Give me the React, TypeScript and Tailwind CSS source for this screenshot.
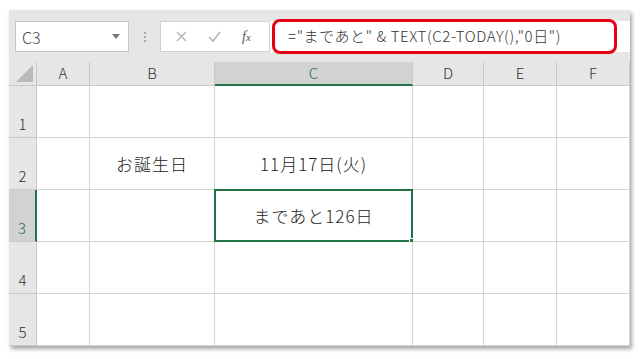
import React from "react";

const font = { fontFamily: '"Noto Sans CJK JP", "Noto Sans", sans-serif' };

const cols = ["A", "B", "C", "D", "E", "F"];
const rows = [1, 2, 3, 4, 5];

function Cell({ r, c }: { r: number; c: string }) {
  let text = "";
  if (r === 2 && c === "B") text = "お誕生日";
  if (r === 2 && c === "C") text = "11月17日(火)";
  if (r === 3 && c === "C") text = "まであと126日";
  const selected = r === 3 && c === "C";
  return (
    <div className="relative flex items-center justify-center border-r border-b border-[#d4d4d4] bg-white text-[17px] tracking-[1px] font-light text-[#222]">
      {text}
      {selected && (
        <div className="absolute -top-px -left-px -right-px -bottom-px border-2 border-[#217346]">
          <div className="absolute -right-[4px] -bottom-[4px] w-[6px] h-[6px] bg-[#217346] border border-white" />
        </div>
      )}
    </div>
  );
}

function App() {
  return (
    <div className="w-[643px] h-[359px] bg-white pt-[10px] pl-[9px]" style={font}>
      <div className="w-[621px] h-[336px] bg-[#e6e6e6] shadow-[2px_3px_4px_rgba(0,0,0,0.35)] flex flex-col">
        {/* toolbar */}
        <div className="h-[52px] flex items-start pt-[11px] pl-[6px]">
          <div className="w-[114px] h-[31px] bg-white border border-[#c6c6c6] flex items-center justify-between pl-[6px] pr-[8px] text-[16px] font-light text-[#444]">
            <span>C3</span>
            <svg width="8" height="5" viewBox="0 0 8 5">
              <path d="M0 0h8L4 5z" fill="#777" />
            </svg>
          </div>
          <div className="w-[31px] h-[31px] flex flex-col items-center justify-center gap-[2px]">
            <span className="w-[2px] h-[2px] bg-[#aaa]" />
            <span className="w-[2px] h-[2px] bg-[#aaa]" />
            <span className="w-[2px] h-[2px] bg-[#aaa]" />
          </div>
          <div className="w-[110px] h-[31px] bg-white border border-[#d0d0d0] flex items-center">
            <svg className="ml-[15px]" width="11" height="11" viewBox="0 0 11 11">
              <path d="M1 1l9 9M10 1l-9 9" stroke="#b4b4b4" strokeWidth="1.4" />
            </svg>
            <svg className="ml-[21px]" width="13" height="11" viewBox="0 0 13 11">
              <path d="M1 6l4 4 7-9" stroke="#b4b4b4" strokeWidth="1.6" fill="none" />
            </svg>
            <span
              className="ml-[21px] italic text-[14px] text-[#555]"
              style={{ fontFamily: '"Liberation Serif", serif' }}
            >
              f<span className="text-[11px]">x</span>
            </span>
          </div>
          <div className="flex-1 h-[31px] bg-white relative">
            <div className="absolute left-[2px] -top-[2px] w-[345px] h-[35px] border-[3px] border-[#e50012] rounded-[8px] flex items-center pl-[13px] text-[15px] tracking-[0.6px] font-light text-[#333] whitespace-nowrap">
              ="まであと" &amp; TEXT(C2-TODAY(),"0日")
            </div>
          </div>
        </div>
        {/* sheet */}
        <div className="mt-[10px] grid grid-cols-[28px_53px_125px_198px_71px_73px_73px] grid-rows-[24px_repeat(5,52px)]">
          <div className="bg-[#e6e6e6] border-r border-b border-[#c8c8c8] relative">
            <svg className="absolute right-[3px] bottom-[3px]" width="17" height="17" viewBox="0 0 17 17">
              <path d="M17 0V17H0z" fill="#b9b9b9" />
            </svg>
          </div>
          {cols.map((c) => (
            <div
              key={c}
              className={
                c === "C"
                  ? "bg-[#d2d2d2] border-r border-[#c8c8c8] border-b-2 border-b-[#217346] flex items-center justify-center text-[15px] font-light text-[#217346]"
                  : "bg-[#e6e6e6] border-r border-b border-[#c8c8c8] flex items-center justify-center text-[15px] font-light text-[#333]"
              }
            >
              {c}
            </div>
          ))}
          {rows.map((r) => (
            <React.Fragment key={r}>
              <div
                className={
                  r === 3
                    ? "bg-[#d2d2d2] border-r-2 border-r-[#217346] border-b border-[#c8c8c8] flex items-end justify-center pb-[2px] text-[15px] font-light text-[#217346]"
                    : "bg-[#e6e6e6] border-r border-b border-[#c8c8c8] flex items-end justify-center pb-[2px] text-[15px] font-light text-[#333]"
                }
              >
                {r}
              </div>
              {cols.map((c) => (
                <Cell key={c} r={r} c={c} />
              ))}
            </React.Fragment>
          ))}
        </div>
      </div>
    </div>
  );
}

export default App;
